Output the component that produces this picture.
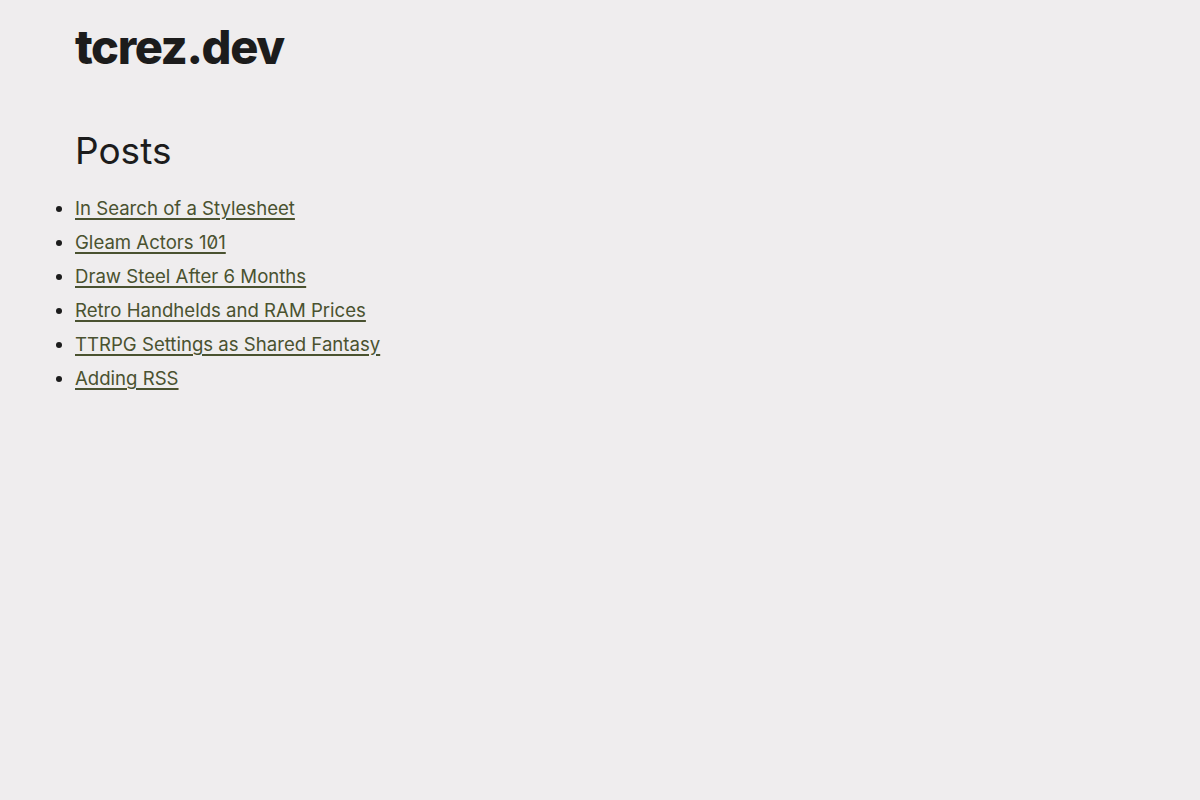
const posts = [
  'In Search of a Stylesheet',
  'Gleam Actors 101',
  'Draw Steel After 6 Months',
  'Retro Handhelds and RAM Prices',
  'TTRPG Settings as Shared Fantasy',
  'Adding RSS',
];

export default function App() {
  return (
    <div className="min-h-screen bg-[#efedee] px-[75px] text-[#1c1c1c] font-['Inter',sans-serif]">
      <header className="pt-[18px]">
        <h1 className="text-[47px] font-extrabold leading-[58px] tracking-[-1.4px]">
          tcrez.dev
        </h1>
      </header>

      <main className="mt-[53px]">
        <h2 className="text-[37px] font-normal leading-[44px]">Posts</h2>
        <ul className="mt-[18px] list-disc slashed-zero">
          {posts.map((title) => (
            <li key={title} className="text-[18.6px] leading-[34px] text-[#1c1c1c]">
              <a
                href="#"
                className="text-[#4a5230] underline decoration-[1.5px] underline-offset-[3px]"
              >
                {title}
              </a>
            </li>
          ))}
        </ul>
      </main>
    </div>
  );
}
